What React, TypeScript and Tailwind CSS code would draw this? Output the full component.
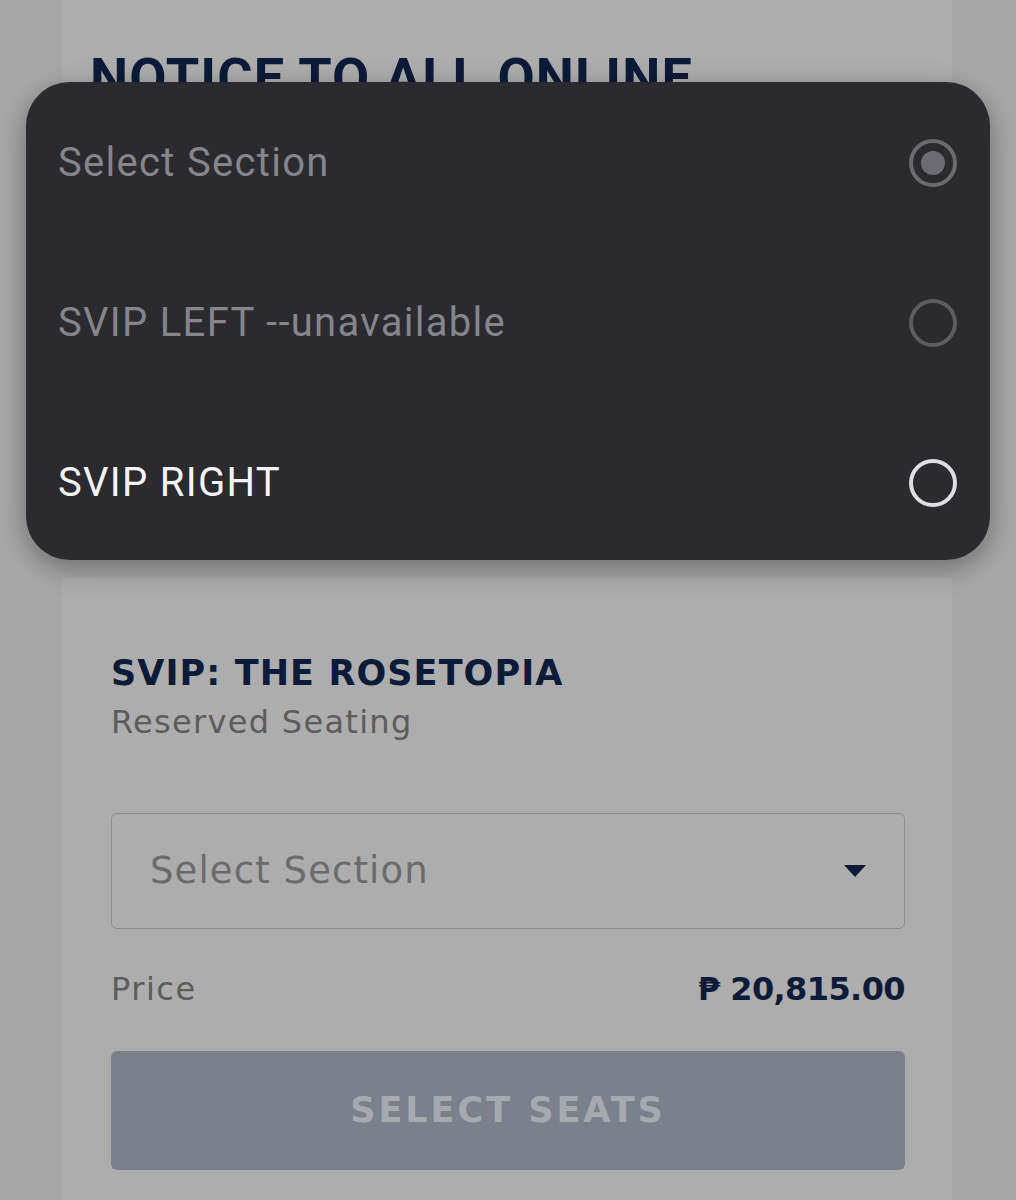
import React from 'react'

const options = [
  { label: 'Select Section', text: 'text-[#85858a]', ring: 'border-[#6a6a6f]', checked: true },
  { label: 'SVIP LEFT --unavailable', text: 'text-[#85858a]', ring: 'border-[#5c5c61]', checked: false },
  { label: 'SVIP RIGHT', text: 'text-[#f4f4f6]', ring: 'border-[#dedee4]', checked: false },
]

function Radio({ ring, checked }: { ring: string; checked: boolean }) {
  return (
    <div className={`w-[48px] h-[48px] rounded-full border-[4px] ${ring} flex items-center justify-center`}>
      {checked && <div className="w-[24px] h-[24px] rounded-full bg-[#6c6c72]" />}
    </div>
  )
}

export default function App() {
  return (
    <div className="relative min-h-[1200px] h-[1200px] overflow-hidden bg-[#a7a7a7] font-['Roboto',sans-serif]">
      <div className="ml-[62px] w-[890px] flex flex-col gap-[17px]">
        {/* notice card */}
        <div className="h-[560px] bg-[#adadad] px-[28px] pt-[46px]">
          <h2 className="text-[54px] leading-[64px] font-bold text-[#0c1b38] tracking-[1.1px]">
            NOTICE TO ALL ONLINE
          </h2>
        </div>

        {/* ticket card */}
        <div className="bg-[#adadad] pl-[49px] pr-[47px] pt-[74px] pb-[40px] font-['DejaVu_Sans',sans-serif]">
          <div className="text-[35px] leading-[44px] font-bold text-[#0c1b38] tracking-[1.1px]">SVIP: THE ROSETOPIA</div>
          <div className="text-[32px] leading-[42px] text-[#5c5c5c] tracking-[1.3px] mt-[6px]">Reserved Seating</div>

          <div className="mt-[70px] h-[116px] rounded-[6px] border border-[#8d8d8d] flex items-center pl-[38px] pr-[37px]">
            <span className="flex-1 text-[37px] text-[#6b6b6b] tracking-[1.1px]">Select Section</span>
            <svg width="24" height="14" viewBox="0 0 24 14">
              <path d="M1 1 H23 L12 13 Z" fill="#0c1b38" />
            </svg>
          </div>

          <div className="mt-[40px] flex items-center justify-between">
            <span className="text-[32px] leading-[40px] text-[#5c5c5c] tracking-[1.5px]">Price</span>
            <span className="text-[32px] leading-[40px] font-bold text-[#0c1b38] tracking-[-0.6px]">₱ 20,815.00</span>
          </div>

          <button className="mt-[42px] w-full h-[119px] rounded-[6px] bg-[#7b818b] flex items-center justify-center">
            <span className="text-[35px] font-bold text-[#a6a9ae] tracking-[3px]">SELECT SEATS</span>
          </button>
        </div>
      </div>

      {/* section picker dialog */}
      <div className="absolute left-[26px] top-[82px] w-[964px] h-[478px] rounded-[44px] bg-[#2a2a2f] shadow-[0_8px_28px_rgba(0,0,0,0.35)] overflow-hidden pt-[1px]">
        {options.map((o) => (
          <div key={o.label} className="h-[160px] flex items-center pl-[32px] pr-[33px]">
            <span className={`flex-1 text-[40px] tracking-[1.3px] ${o.text}`}>{o.label}</span>
            <Radio ring={o.ring} checked={o.checked} />
          </div>
        ))}
      </div>
    </div>
  )
}
